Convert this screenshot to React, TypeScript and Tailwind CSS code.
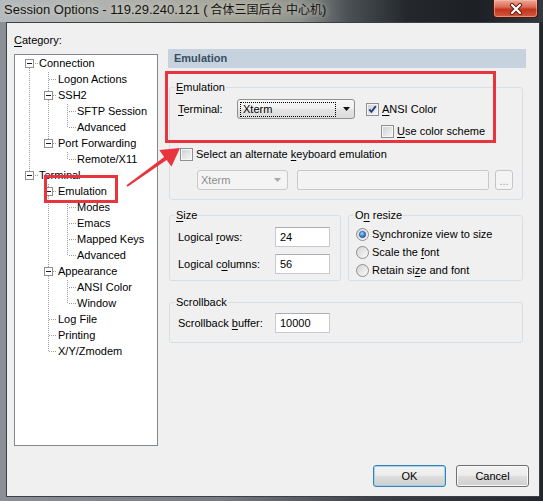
import React from 'react';

type Row = { t: string; l: number; exp?: boolean };
const rows: Row[] = [
  { t: 'Connection', l: 0, exp: true },
  { t: 'Logon Actions', l: 1 },
  { t: 'SSH2', l: 1, exp: true },
  { t: 'SFTP Session', l: 2 },
  { t: 'Advanced', l: 2 },
  { t: 'Port Forwarding', l: 1, exp: true },
  { t: 'Remote/X11', l: 2 },
  { t: 'Terminal', l: 0, exp: true },
  { t: 'Emulation', l: 1, exp: true },
  { t: 'Modes', l: 2 },
  { t: 'Emacs', l: 2 },
  { t: 'Mapped Keys', l: 2 },
  { t: 'Advanced', l: 2 },
  { t: 'Appearance', l: 1, exp: true },
  { t: 'ANSI Color', l: 2 },
  { t: 'Window', l: 2 },
  { t: 'Log File', l: 1 },
  { t: 'Printing', l: 1 },
  { t: 'X/Y/Zmodem', l: 1 },
];

function hasNext(idx: number, level: number) {
  for (let j = idx + 1; j < rows.length; j++) {
    if (rows[j].l < level) return false;
    if (rows[j].l === level) return true;
  }
  return false;
}

const LC = '#a0a0a0';

function vDots(x: number, y0: number, y1: number, key: string) {
  const out: React.ReactNode[] = [];
  for (let y = y0; y < y1; y++) {
    if (y % 2 === 1) out.push(<rect key={key + y} x={x} y={y} width={1} height={1} fill={LC} />);
  }
  return out;
}
function hDots(x0: number, x1: number, y: number, key: string) {
  const out: React.ReactNode[] = [];
  for (let x = x0; x < x1; x++) {
    if (x % 2 === 0) out.push(<rect key={key + x} x={x} y={y} width={1} height={1} fill={LC} />);
  }
  return out;
}

function TreeRow({ i }: { i: number }) {
  const r = rows[i];
  const cont: boolean[] = [];
  for (let a = 0; a < r.l; a++) {
    let k = i - 1;
    while (k >= 0 && rows[k].l !== a) k--;
    cont.push(hasNext(k, a));
  }
  const next = hasNext(i, r.l);
  const cx = 14 + 19 * r.l;
  const w = 24 + 19 * r.l;
  return (
    <div className="flex items-center h-[16px]">
      <svg width={w} height={16} className="shrink-0">
        {cont.map((c, a) => (c ? vDots(14 + 19 * a, 0, 16, 'a' + a + '-') : null))}
        {i !== 0 && vDots(cx, 0, 8, 'u')}
        {next && vDots(cx, 8, 16, 'd')}
        {hDots(cx + 1, cx + 9, 8, 'h')}
        {r.exp && (
          <g>
            <rect x={cx - 3.5} y={4.5} width={8} height={8} fill="#fff" stroke="#919191" />
            <rect x={cx - 2} y={8} width={5} height={1} fill="#1a1a1a" />
          </g>
        )}
      </svg>
      <span className="text-[11px] leading-[16px] text-black whitespace-nowrap">{r.t}</span>
    </div>
  );
}

function Checkbox({ checked }: { checked?: boolean }) {
  return (
    <svg width={13} height={13} className="shrink-0">
      <rect x={0.5} y={0.5} width={12} height={12} fill="#f6f6f6" stroke="#8e8f8f" />
      <rect x={2} y={2} width={9} height={9} fill="url(#cbg)" />
      {checked && (
        <path d="M3.3 6.3 L5.4 8.8 L9.8 3.2" fill="none" stroke="#263e7c" strokeWidth={1.9} />
      )}
    </svg>
  );
}

function Radio({ on }: { on?: boolean }) {
  return (
    <svg width={13} height={13} className="shrink-0">
      <circle cx={6.5} cy={6.5} r={6} fill="url(#rbg)" stroke="#8e8f8f" />
      {on && <circle cx={6.5} cy={6.5} r={3.2} fill="url(#rdot)" stroke="#1b4f93" strokeWidth={0.6} />}
    </svg>
  );
}

function U({ children }: { children: React.ReactNode }) {
  return <span className="underline underline-offset-[2px]">{children}</span>;
}

function Input({ value }: { value: string }) {
  return (
    <div className="w-[55px] h-[20px] bg-white border border-[#c5cbd1] border-t-[#abadb3] flex items-center pl-[4px] text-[11px] text-black">
      {value}
    </div>
  );
}

function Button({ label, def }: { label: string; def?: boolean }) {
  return (
    <div
      className={
        'w-[73px] h-[22px] rounded-[3px] border flex items-center justify-center text-[11px] text-black bg-[linear-gradient(180deg,#f3f3f3_0%,#ebebeb_48%,#dddddd_52%,#cfcfcf_100%)] ' +
        (def
          ? 'border-[#3c7fb1] shadow-[inset_0_0_0_1px_#9fd5f0]'
          : 'border-[#707070] shadow-[inset_0_0_0_1px_#fafafa]')
      }
    >
      {label}
    </div>
  );
}

export default function App() {
  return (
    <div className="relative w-[543px] h-[501px] overflow-hidden flex flex-col bg-[linear-gradient(90deg,#8a9095_0%,#767c81_40%,#3a3f45_70%,#23272c_100%)] font-['Liberation_Sans','Noto_Sans_CJK_SC',sans-serif]">
      <svg className="absolute w-0 h-0">
        <defs>
          <linearGradient id="cbg" x1="0" y1="0" x2="1" y2="1">
            <stop offset="0" stopColor="#cfd1d4" />
            <stop offset="1" stopColor="#f4f5f6" />
          </linearGradient>
          <linearGradient id="rbg" x1="0" y1="0" x2="1" y2="1">
            <stop offset="0" stopColor="#d2d3d5" />
            <stop offset="1" stopColor="#fbfbfb" />
          </linearGradient>
          <radialGradient id="rdot" cx="0.4" cy="0.35" r="0.7">
            <stop offset="0" stopColor="#a9d4fa" />
            <stop offset="0.6" stopColor="#3b82d4" />
            <stop offset="1" stopColor="#1d5aa6" />
          </radialGradient>
        </defs>
      </svg>

      {/* Title bar */}
      <div className="h-[22px] flex items-start bg-[linear-gradient(90deg,#b4b9bd_0%,#aeb0ab_25%,#a3a397_45%,#8e918c_55%,#4c5156_64%,#24282d_75%,#1c2025_88%,#33393f_100%)]">
        <div className="pl-[4px] h-[20px] flex items-center text-[13px] text-[#141414] whitespace-nowrap [text-shadow:0_0_6px_#e6e2d2]">
          Session Options - 119.29.240.121 ( <span className="text-[12px] ml-[3px]">合体三国后台 中心机</span>)
        </div>
        <div className="ml-auto mr-[5px] w-[45px] h-[18px] rounded-b-[4px] border border-t-0 border-[#4a1712] bg-[linear-gradient(180deg,#eba895_0%,#dc6a55_42%,#c4341f_55%,#d25a3e_100%)] flex items-center justify-center shadow-[inset_0_0_0_1px_rgba(255,200,180,0.5)]">
          <svg width={14} height={12} viewBox="0 0 14 12">
            <path d="M3 2 L11 10 M11 2 L3 10" stroke="#5a1a12" strokeWidth={4} strokeLinecap="round" />
            <path d="M3 2 L11 10 M11 2 L3 10" stroke="#ffffff" strokeWidth={2.2} strokeLinecap="round" />
          </svg>
        </div>
      </div>

      {/* Client area */}
      <div className="ml-[6px] mr-[3px] mb-[4px] h-[475px] border border-[#3b4046] bg-[#f0f0f0] px-[7px] pt-[10px] flex flex-col text-[11px] text-black">
        <div className="flex items-start">
          {/* Left column */}
          <div className="w-[144px] flex flex-col">
            <div className="leading-[14px] h-[14px]">
              <U>C</U>ategory:
            </div>
            <div className="mt-[7px] w-[144px] h-[392px] bg-white border border-[#828790]">
              {rows.map((_, i) => (
                <TreeRow key={i} i={i} />
              ))}
            </div>
          </div>

          {/* Right column */}
          <div className="ml-[10px] w-[358px] flex flex-col">
            <div className="mt-[16px] h-[19px] bg-[#c6d2de] flex items-center pl-[6px] font-bold text-[#3a4d62]">
              Emulation
            </div>

            <fieldset className="mt-[12px] ml-[1px] w-[354px] border border-[#d5dfe5] rounded-[3px] pb-[9px]">
              <legend className="ml-[5px] px-[1px] leading-[14px]">
                <U>E</U>mulation
              </legend>
              <div className="mt-[5px] h-[20px] flex items-center pl-[8px]">
                <span className="w-[59px]">
                  <U>T</U>erminal:
                </span>
                <div className="w-[118px] h-[20px] rounded-[3px] border border-[#8e8f8f] bg-[linear-gradient(180deg,#f7f7f7_0%,#efefef_50%,#e4e4e4_52%,#dcdcdc_100%)] flex items-center">
                  <div className="ml-[2px] w-[96px] h-[15px] border border-dotted border-black flex items-center pl-[2px] leading-[13px]">
                    Xterm
                  </div>
                  <svg width={7} height={4} className="ml-[7px]">
                    <path d="M0 0 L7 0 L3.5 4 Z" fill="#111" />
                  </svg>
                </div>
                <div className="ml-[11px]">
                  <Checkbox checked />
                </div>
                <span className="ml-[3px]">
                  <U>A</U>NSI Color
                </span>
              </div>
              <div className="mt-[6px] h-[13px] flex items-center pl-[211px]">
                <Checkbox />
                <span className="ml-[3px]">
                  <U>U</U>se color scheme
                </span>
              </div>
              <div className="mt-[10px] h-[13px] flex items-center pl-[10px]">
                <Checkbox />
                <span className="ml-[3px]">
                  Select an alternate <U>k</U>eyboard emulation
                </span>
              </div>
              <div className="mt-[9px] h-[20px] flex items-center pl-[27px]">
                <div className="w-[91px] h-[20px] rounded-[3px] border border-[#c9c9c9] bg-[#f4f4f4] flex items-center pl-[3px] text-[#8d8d8d]">
                  <span className="flex-1">Xterm</span>
                  <svg width={7} height={4} className="mr-[6px]">
                    <path d="M0 0 L7 0 L3.5 4 Z" fill="#a8a8a8" />
                  </svg>
                </div>
                <div className="ml-[9px] w-[192px] h-[20px] rounded-[2px] border border-[#c9c9c9] bg-[#f3f3f3]" />
                <div className="ml-[6px] w-[18px] h-[20px] rounded-[3px] border border-[#c3c6c9] bg-[#f4f4f4] flex items-end justify-center pb-[4px] text-[#9a9a9a] leading-[8px]">
                  ...
                </div>
              </div>
            </fieldset>

            <div className="mt-[8px] ml-[1px] flex items-start gap-[7px]">
              <fieldset className="w-[172px] border border-[#d5dfe5] rounded-[3px] pb-[6px]">
                <legend className="ml-[5px] px-[1px] leading-[14px]">
                  <U>S</U>ize
                </legend>
                <div className="mt-[5px] h-[20px] flex items-center pl-[8px]">
                  <span className="w-[97px]">
                    Logical <U>r</U>ows:
                  </span>
                  <Input value="24" />
                </div>
                <div className="mt-[7px] h-[20px] flex items-center pl-[8px]">
                  <span className="w-[97px]">
                    Logical c<U>o</U>lumns:
                  </span>
                  <Input value="56" />
                </div>
              </fieldset>
              <fieldset className="w-[175px] border border-[#d5dfe5] rounded-[3px] pb-[1px]">
                <legend className="ml-[5px] px-[1px] leading-[14px]">
                  O<U>n</U> resize
                </legend>
                <div className="mt-[3px] h-[18px] flex items-center pl-[7px]">
                  <Radio on />
                  <span className="ml-[3px]">
                    S<U>y</U>nchronize view to size
                  </span>
                </div>
                <div className="h-[18px] flex items-center pl-[7px]">
                  <Radio />
                  <span className="ml-[3px]">
                    Scale the <U>f</U>ont
                  </span>
                </div>
                <div className="h-[18px] flex items-center pl-[7px]">
                  <Radio />
                  <span className="ml-[3px]">
                    Retain si<U>z</U>e and font
                  </span>
                </div>
              </fieldset>
            </div>

            <fieldset className="mt-[14px] ml-[1px] w-[354px] border border-[#d5dfe5] rounded-[3px] pb-[9px]">
              <legend className="ml-[5px] px-[1px] leading-[14px]">Scrollback</legend>
              <div className="mt-[4px] h-[20px] flex items-center pl-[8px]">
                <span className="w-[97px]">
                  Scrollback <U>b</U>uffer:
                </span>
                <Input value="10000" />
              </div>
            </fieldset>
          </div>
        </div>

        <div className="mt-[19px] mr-[3px] flex justify-end gap-[10px]">
          <Button label="OK" def />
          <Button label="Cancel" />
        </div>
      </div>

      {/* Red annotations */}
      <div className="absolute left-[165px] top-[71px] w-[331px] h-[72px] border-[3px] border-[#e8343c] pointer-events-none" />
      <div className="absolute left-[44px] top-[175px] w-[74px] h-[28px] border-[3px] border-[#e8343c] pointer-events-none" />
      <svg className="absolute left-0 top-0 pointer-events-none" width={543} height={501}>
        <polygon
          points="127.6,186.8 166.6,160.1 171.5,166.5 180,148 159.3,150.0 164.2,156.9 126.4,185.2"
          fill="#e8343c"
        />
      </svg>
    </div>
  );
}
